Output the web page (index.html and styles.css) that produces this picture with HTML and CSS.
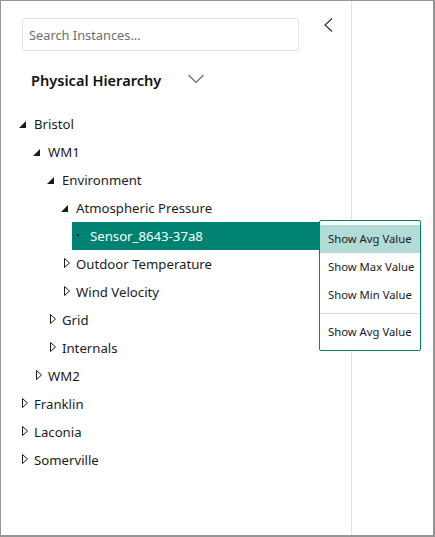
FILE: index.html
```html
<!DOCTYPE html>
<html>
<head>
<meta charset="utf-8">
<link rel="stylesheet" href="styles.css">
</head>
<body>
<div class="frame">
  <aside class="panel">
    <div class="top">
      <input class="search" type="text" placeholder="Search Instances...">
      <button class="collapse" aria-label="Collapse">
        <svg width="16" height="16" viewBox="0 0 16 16"><polyline points="12,1.5 5,8 12,14.5" fill="none" stroke="#24344a" stroke-width="1.2"/></svg>
      </button>
    </div>
    <div class="hier-title">
      <span>Physical Hierarchy</span>
      <svg width="16" height="10" viewBox="0 0 16 10"><polyline points="0.5,1 8,8.5 15.5,1" fill="none" stroke="#666" stroke-width="1.1"/></svg>
    </div>
    <ul class="tree">
      <li class="row l0"><svg class="ic" viewBox="0 0 16 28"><polygon class="ex" points="8,11 8,18 1,18"/></svg>Bristol</li>
      <li class="row l1"><svg class="ic" viewBox="0 0 16 28"><polygon class="ex" points="8,11 8,18 1,18"/></svg>WM1</li>
      <li class="row l2"><svg class="ic" viewBox="0 0 16 28"><polygon class="ex" points="8,11 8,18 1,18"/></svg>Environment</li>
      <li class="row l3"><svg class="ic" viewBox="0 0 16 28"><polygon class="ex" points="8,11 8,18 1,18"/></svg>Atmospheric Pressure</li>
      <li class="row l4 sel"><svg class="ic" viewBox="0 0 16 28"><rect class="dot" x="3" y="12" width="2" height="2"/></svg>Sensor_8643-37a8</li>
      <li class="row l3"><svg class="ic" viewBox="0 0 16 28"><polygon class="co" points="4.5,8.5 9.5,13 4.5,17.5"/></svg>Outdoor Temperature</li>
      <li class="row l3"><svg class="ic" viewBox="0 0 16 28"><polygon class="co" points="4.5,8.5 9.5,13 4.5,17.5"/></svg>Wind Velocity</li>
      <li class="row l2"><svg class="ic" viewBox="0 0 16 28"><polygon class="co" points="4.5,8.5 9.5,13 4.5,17.5"/></svg>Grid</li>
      <li class="row l2"><svg class="ic" viewBox="0 0 16 28"><polygon class="co" points="4.5,8.5 9.5,13 4.5,17.5"/></svg>Internals</li>
      <li class="row l1"><svg class="ic" viewBox="0 0 16 28"><polygon class="co" points="4.5,8.5 9.5,13 4.5,17.5"/></svg>WM2</li>
      <li class="row l0"><svg class="ic" viewBox="0 0 16 28"><polygon class="co" points="4.5,8.5 9.5,13 4.5,17.5"/></svg>Franklin</li>
      <li class="row l0"><svg class="ic" viewBox="0 0 16 28"><polygon class="co" points="4.5,8.5 9.5,13 4.5,17.5"/></svg>Laconia</li>
      <li class="row l0"><svg class="ic" viewBox="0 0 16 28"><polygon class="co" points="4.5,8.5 9.5,13 4.5,17.5"/></svg>Somerville</li>
    </ul>
  </aside>
  <main class="content"></main>
  <div class="menu">
    <div class="mi active">Show Avg Value</div>
    <div class="mi">Show Max Value</div>
    <div class="mi">Show Min Value</div>
    <div class="sep"></div>
    <div class="mi">Show Avg Value</div>
  </div>
</div>
</body>
</html>
```
FILE: styles.css
```css
* { box-sizing: border-box; }
html, body { margin: 0; padding: 0; background: #fff; }
body { font-family: "Noto Sans", "Open Sans", sans-serif; color: #1b1b1b; }

.frame {
  position: relative;
  width: 435px;
  height: 537px;
  display: flex;
  border-style: solid;
  border-color: #969696;
  border-width: 1px 2px 2px 1px;
}

.panel {
  width: 351px;
  flex: 0 0 351px;
  border-right: 1px solid #e1e1e1;
}
.content { flex: 1; }

.top {
  display: flex;
  align-items: flex-start;
  padding: 17px 0 0 21px;
}
.search {
  width: 277px;
  height: 33px;
  border: 1px solid #e3e3e3;
  border-radius: 2px;
  padding: 0 0 0 6px;
  font-family: inherit;
  font-size: 12.8px;
  color: #333;
  outline: none;
}
.search::placeholder { color: #6e6e6e; }
.collapse {
  margin: -1px 0 0 21px;
  padding: 0;
  border: 0;
  background: none;
  width: 16px;
  height: 16px;
  display: flex;
}

.hier-title {
  display: flex;
  align-items: center;
  margin: 18px 0 0 30px;
  height: 22px;
  font-size: 14.6px;
  font-weight: 600;
  color: #111;
}
.hier-title svg { margin-left: 27px; margin-top: -2px; }

.tree {
  list-style: none;
  margin: 19px 0 0 0;
  padding: 0;
}
.row {
  display: flex;
  align-items: center;
  height: 28px;
  font-size: 13.2px;
  padding-left: 2px;
  white-space: nowrap;
}
.l0 { margin-left: 15px; }
.l1 { margin-left: 29px; }
.l2 { margin-left: 43px; }
.l3 { margin-left: 57px; }
.l4 { margin-left: 71px; }
.row.sel { background: #008272; color: #fff; }

.ic {
  width: 16px;
  height: 28px;
  flex: 0 0 16px;
}
.ic .ex { fill: #1b1b1b; }
.ic .co { fill: none; stroke: #1b1b1b; stroke-width: 1; }
.ic .dot { fill: #1b1b1b; }

.menu {
  position: absolute;
  left: 318px;
  top: 219px;
  width: 102px;
  border: 1px solid #008272;
  border-radius: 2px;
  background: #fff;
  padding: 4px 0 4px;
}
.mi {
  height: 28px;
  line-height: 28px;
  padding-left: 8px;
  font-size: 11.3px;
  color: #1b1b1b;
  white-space: nowrap;
}
.mi.active { background: #b3dbd5; }
.sep {
  height: 1px;
  margin: 4px 0 4px;
  background: #cfe5e1;
}
```
